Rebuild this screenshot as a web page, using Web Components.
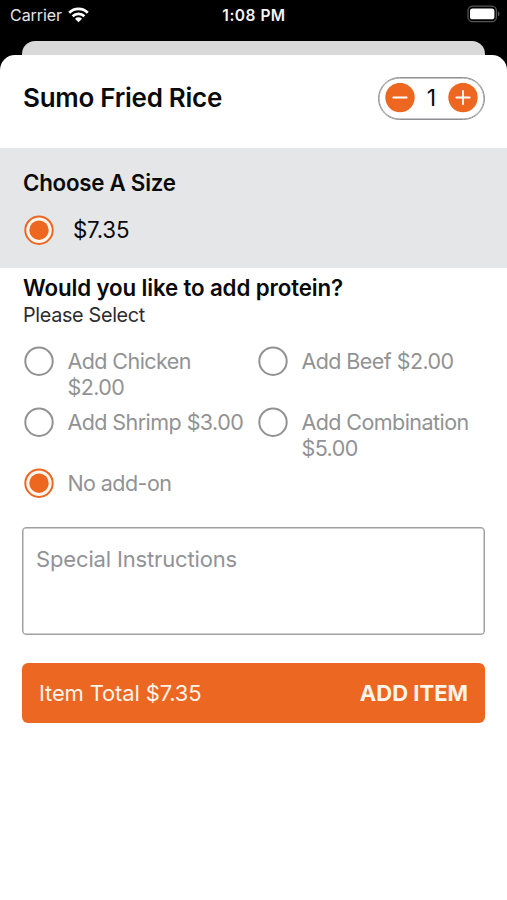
<!DOCTYPE html>
<html lang="en">
<head>
<meta charset="utf-8">
<title>Sumo Fried Rice</title>
<style>
  html, body { margin: 0; height: 100%; background: #000; }
  body { font-family: Inter, "Liberation Sans", sans-serif; color: #0a0a0b; overflow: hidden; }
</style>
</head>
<body>
<order-screen></order-screen>
<script>
const define = (name, html) => customElements.define(name, class extends HTMLElement {
  constructor() {
    super();
    const t = document.createElement('template');
    t.innerHTML = html;
    this.attachShadow({ mode: 'open' }).append(t.content.cloneNode(true));
  }
});

define('status-bar', `
<style>
  :host { display: grid; grid-template-columns: 1fr auto 1fr; align-items: center; height: 30px; padding: 0 7px 0 10px; box-sizing: border-box; background: #000; color: #e6e6e6; font-size: 16px; line-height: 20px; }
  .left { display: flex; align-items: center; gap: 6px; letter-spacing: -0.06px; }
  .left svg { margin-top: -1px; }
  .time { font-weight: 600; color: #f4f4f4; font-size: 15.5px; letter-spacing: 0.5px; margin-right: 2px; padding-top: 1px; }
  .right { justify-self: end; display: flex; margin-top: -2px; }
  svg { display: block; }
</style>
<div class="left"><span>Carrier</span>
  <svg width="21" height="16" viewBox="0 0 21 16" fill="none" stroke="#fff" stroke-width="2.7"><path d="M1.2 5.7a13.2 13.2 0 0 1 18.6 0M4.6 9.2a8.4 8.4 0 0 1 11.8 0"/><path d="M10.5 15.2L7 11.7a5 5 0 0 1 7 0z" fill="#fff" stroke="none"/></svg>
</div>
<div class="time">1:08 PM</div>
<div class="right">
  <svg width="33" height="18" viewBox="0 0 33 18"><rect x="1" y="1.2" width="28.4" height="15.4" rx="4.6" fill="none" stroke="#555" stroke-width="1.3"/><rect x="3" y="3.5" width="24.4" height="10.8" rx="2.6" fill="#fff"/><path d="M31 6.5c2 .6 2 4.2 0 4.8z" fill="#555"/></svg>
</div>`);

define('round-button', `
<style>
  :host { display: block; width: 30px; height: 30px; color: #fff; }
  svg { display: block; }
  .v { display: none; }
  :host([kind="plus"]) .v { display: block; }
</style>
<svg width="30" height="30" viewBox="0 0 30 30" stroke="#fff" stroke-width="1.8" stroke-linecap="round"><circle cx="15" cy="14.5" r="14.7" fill="#ed6721" stroke="none"/><path d="M8.3 14.5h13.4"/><path class="v" d="M15 7.8v13.4"/></svg>`);

define('quantity-stepper', `
<style>
  :host { display: flex; align-items: center; justify-content: space-between; width: 107px; height: 43px; padding: 0 6px; box-sizing: border-box; border: 1px solid #8e8e93; box-shadow: inset 0 0 0 .5px #8e8e93; border-radius: 22px; font-size: 23px; line-height: 30px; }
</style>
<round-button kind="minus"></round-button><slot></slot><round-button kind="plus"></round-button>`);

define('radio-mark', `
<style>
  :host { display: block; width: 30px; height: 30px; flex: none; }
  svg { display: block; }
  .on { display: none; }
  :host([checked]) .on { display: block; }
  :host([checked]) .off { display: none; }
</style>
<svg width="30" height="30" viewBox="0 0 30 30"><circle class="off" cx="15" cy="15.2" r="13.7" fill="none" stroke="#929294" stroke-width="2"/><g class="on"><circle cx="15" cy="15.2" r="13.7" fill="#fff5ec" stroke="#ed6721" stroke-width="2"/><circle cx="15" cy="15.2" r="9.7" fill="#ed6721"/></g></svg>`);

define('radio-option', `
<style>
  :host { display: flex; align-items: flex-start; gap: 14px; }
  .label { padding-top: 2px; }
  :host([checked]) .mark-off, :host(:not([checked])) .mark-on { display: none; }
</style>
<radio-mark class="mark-off"></radio-mark><radio-mark class="mark-on" checked></radio-mark>
<div class="label"><slot></slot></div>`);

define('size-section', `
<style>
  :host { display: block; height: 120px; box-sizing: border-box; padding: 20px 24px 0 23px; background: #e4e6e7; }
  h2 { margin: 0; font-size: 22.3px; line-height: 30px; font-weight: 600; letter-spacing: -.25px; }
  radio-option { margin: 17px 0 0 1px; gap: 19px; font-size: 22.3px; line-height: 26px; letter-spacing: -.2px; }
</style>
<h2>Choose A Size</h2>
<radio-option checked>$7.35</radio-option>`);

define('protein-section', `
<style>
  :host { display: block; height: 241px; padding: 5px 0 0 23px; }
  h2 { margin: 0; font-size: 22.3px; line-height: 30px; font-weight: 600; white-space: nowrap; letter-spacing: -.13px; }
  p { margin: 0; font-size: 19.8px; line-height: 24px; color: #2c2c2e; letter-spacing: -.32px; }
  .options { display: grid; grid-template-columns: 234px 246px; grid-auto-rows: 61.3px; margin: 18.6px 0 0 1px; font-size: 21.5px; line-height: 26.4px; letter-spacing: -.56px; color: #929294; white-space: nowrap; }
  radio-option { gap: 13.4px; }
</style>
<h2>Would you like to add protein?</h2>
<p>Please Select</p>
<div class="options">
  <radio-option>Add Chicken<br>$2.00</radio-option>
  <radio-option>Add Beef $2.00</radio-option>
  <radio-option>Add Shrimp $3.00</radio-option>
  <radio-option>Add Combination<br>$5.00</radio-option>
  <radio-option checked>No add-on</radio-option>
</div>`);

define('note-field', `
<style>
  :host { display: block; height: 108px; box-sizing: border-box; margin: 13px 22px 0; padding: 17px 13px; border: 1px solid #a0a0a2; box-shadow: inset 0 0 0 .5px #a0a0a2; border-radius: 4px; font-size: 22px; line-height: 28px; letter-spacing: -.15px; color: #929297; }
</style><slot></slot>`);

define('add-button', `
<style>
  :host { display: flex; align-items: center; justify-content: space-between; height: 60px; box-sizing: border-box; margin: 28px 22px 0; padding: 0 17px; border-radius: 6px; background: #ec6721; color: #fff4ea; font-size: 22px; line-height: 28px; }
  span { letter-spacing: -.15px; }
  b { font-weight: 700; }
</style><span>Item Total $7.35</span><b>ADD ITEM</b>`);

define('order-screen', `
<style>
  :host { display: flex; flex-direction: column; width: 507px; height: 900px; background: #000; overflow: hidden; }
  .behind { flex: none; margin: 11.4px 22px 0; height: 13.6px; background: #d9d9d9; border-radius: 13px 13px 0 0; }
  main { flex: 1; background: #fff; border-radius: 15px 15px 0 0; }
  header { display: flex; align-items: center; justify-content: space-between; height: 93px; box-sizing: border-box; padding: 0 22px 6px 23px; }
  h1 { margin: 0; font-size: 26px; line-height: 34px; font-weight: 600; white-space: nowrap; letter-spacing: -.27px; }
</style>
<status-bar></status-bar>
<div class="behind"></div>
<main>
  <header><h1>Sumo Fried Rice</h1><quantity-stepper>1</quantity-stepper></header>
  <size-section></size-section>
  <protein-section></protein-section>
  <note-field>Special Instructions</note-field>
  <add-button></add-button>
</main>`);
</script>
</body>
</html>
